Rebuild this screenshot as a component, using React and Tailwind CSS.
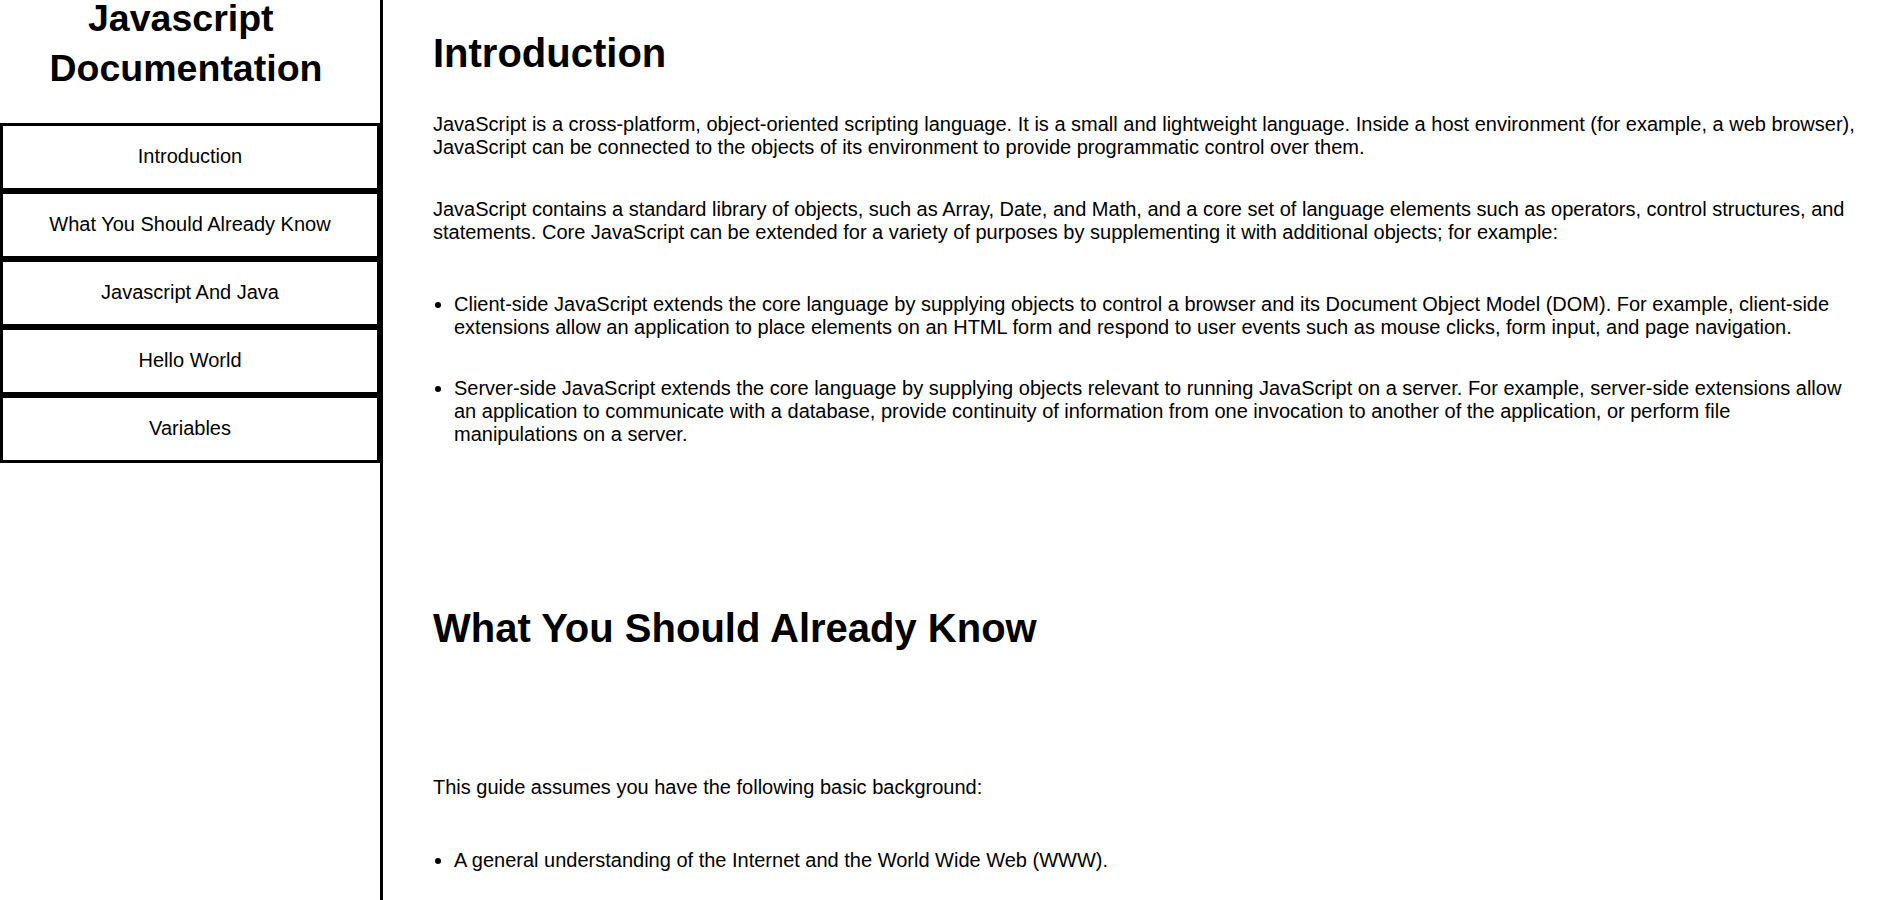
import React from "react";

const navItems = [
    "Introduction",
    "What You Should Already Know",
    "Javascript And Java",
    "Hello World",
    "Variables",
];

export default function App() {
    return (
        <div className="flex h-screen w-full bg-white text-black font-['Liberation_Sans',Arial,sans-serif]">
            <nav id="navbar" className="w-[383px] shrink-0 h-full border-r-[3px] border-black flex flex-col">
                <header className="h-[123px] shrink-0 pr-[8px]">
                    <h1 className="-mt-[7px] text-center text-[37.5px] leading-[50px] font-bold">
                        Javascript{"\u00a0"}
                        <br />
                        Documentation
                    </h1>
                </header>
                {navItems.map((item) => (
                    <a
                        key={item}
                        href={`#${item.replace(/ /g, "_")}`}
                        className="nav-link block border-[3px] border-black pt-[18px] pb-[20px] text-center text-[20px] leading-[24px] text-black"
                    >
                        {item}
                    </a>
                ))}
            </nav>

            <main id="main-doc" className="flex-1 h-full overflow-y-auto [scrollbar-width:none] pl-[50px] pr-[34px] text-[20px] leading-[23px]">
                <section className="main-section" id="Introduction">
                    <h2 className="mt-[30px] text-[40px] leading-[46px] font-bold">Introduction</h2>
                    <p className="mt-[37px]">
                        JavaScript is a cross-platform, object-oriented scripting language. It is a small and lightweight language. Inside a host environment (for example, a web browser), JavaScript can be connected to the objects of its environment to provide programmatic control over them.
                    </p>
                    <p className="mt-[39px]">
                        JavaScript contains a standard library of objects, such as Array, Date, and Math, and a core set of language elements such as operators, control structures, and statements. Core JavaScript can be extended for a variety of purposes by supplementing it with additional objects; for example:
                    </p>
                    <ul className="mt-[49px] list-disc pl-[21px]">
                        <li>
                            Client-side JavaScript extends the core language by supplying objects to control a browser and its Document Object Model (DOM). For example, client-side extensions allow an application to place elements on an HTML form and respond to user events such as mouse clicks, form input, and page navigation.
                        </li>
                        <li className="mt-[38px]">
                            Server-side JavaScript extends the core language by supplying objects relevant to running JavaScript on a server. For example, server-side extensions allow an application to communicate with a database, provide continuity of information from one invocation to another of the application, or perform file manipulations on a server.
                        </li>
                    </ul>
                </section>

                <section className="main-section" id="What_You_Should_Already_Know">
                    <h2 className="mt-[159px] text-[40px] leading-[46px] font-bold">What You Should Already Know</h2>
                    <p className="mt-[125px]">This guide assumes you have the following basic background:</p>
                    <ul className="mt-[50px] list-disc pl-[21px]">
                        <li>A general understanding of the Internet and the World Wide Web (WWW).</li>
                        <li className="mt-[60px]">Good working knowledge of HyperText Markup Language (HTML).</li>
                        <li className="mt-[38px]">Some programming experience. If you are new to programming, try one of the tutorials linked on the main page about JavaScript.</li>
                    </ul>
                </section>

                <section className="main-section" id="Javascript_And_Java">
                    <h2 className="mt-[159px] text-[40px] leading-[46px] font-bold">Javascript And Java</h2>
                    <p className="mt-[37px]">
                        JavaScript and Java are similar in some ways but fundamentally different in some others. The JavaScript language resembles Java but does not have Java's static typing and strong type checking.
                    </p>
                </section>

                <section className="main-section" id="Hello_World">
                    <h2 className="mt-[159px] text-[40px] leading-[46px] font-bold">Hello World</h2>
                    <p className="mt-[37px]">
                        To get started with writing JavaScript, open the Scratchpad and write your first "Hello world" JavaScript code.
                    </p>
                </section>

                <section className="main-section pb-[60px]" id="Variables">
                    <h2 className="mt-[159px] text-[40px] leading-[46px] font-bold">Variables</h2>
                    <p className="mt-[37px]">
                        You use variables as symbolic names for values in your application. The names of variables, called identifiers, conform to certain rules.
                    </p>
                </section>
            </main>
        </div>
    );
}
